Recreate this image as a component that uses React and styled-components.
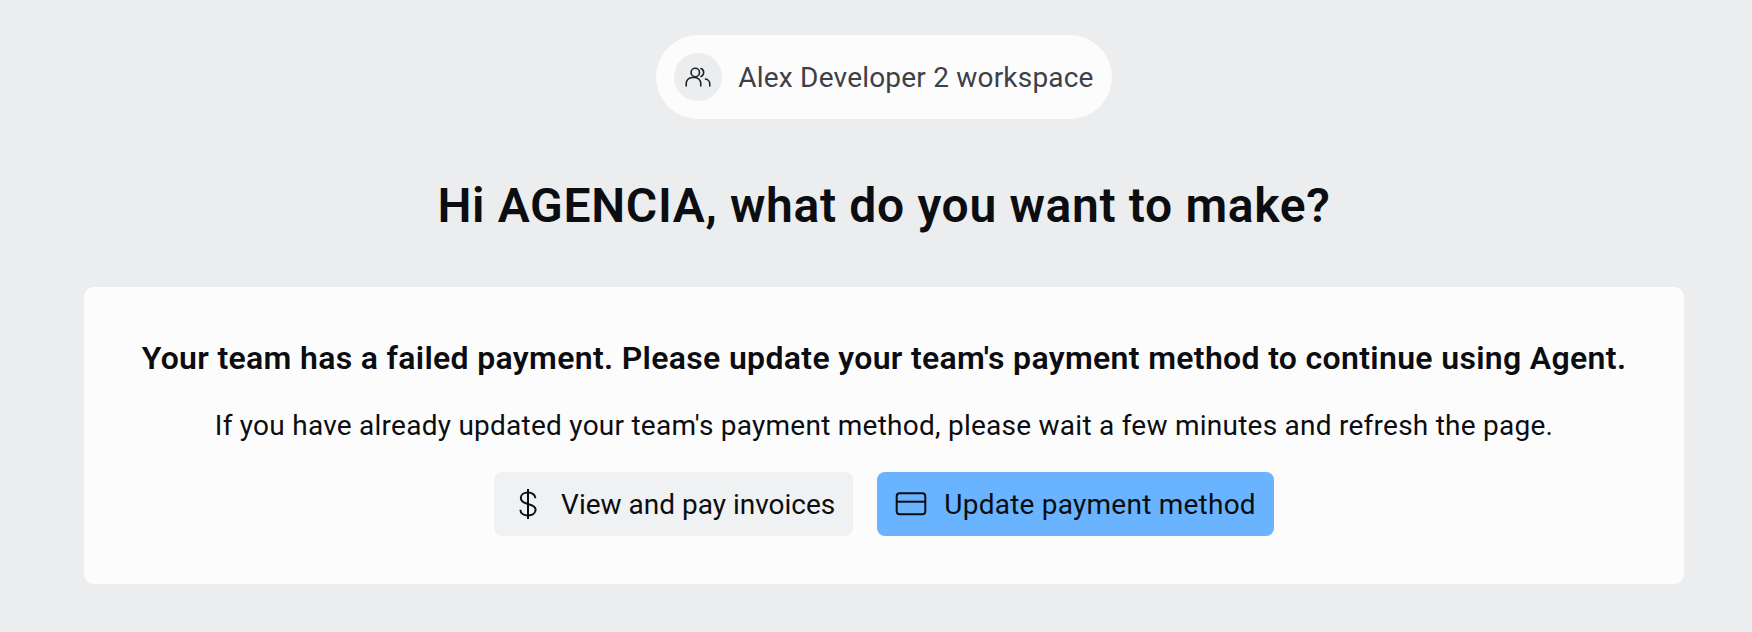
import React from 'react'
import styled, { createGlobalStyle } from 'styled-components'

const GlobalStyle = createGlobalStyle`
  html, body {
    margin: 0;
    padding: 0;
    background: #ecedef;
    font-family: "Roboto", "Liberation Sans", sans-serif;
  }
`

const App = () => {
  return (
    <Page>
      <GlobalStyle />
      <WorkspacePill>
        <Avatar>
          <svg width="26" height="26" viewBox="0 0 26 26" fill="none" stroke="#1f2328" strokeWidth="1.6" strokeLinecap="round">
            <circle cx="10.3" cy="8.5" r="4.2" />
            <path d="M1.2 22v-2.5a6 6 0 0 1 6-6h2.6a6 6 0 0 1 6 6V22" />
            <path d="M16 4.6a4.2 4.2 0 0 1 0 7.8" />
            <path d="M20.4 15a5 5 0 0 1 4.4 5v2" />
          </svg>
        </Avatar>
        <WorkspaceName>Alex Developer 2 workspace</WorkspaceName>
      </WorkspacePill>
      <Heading>Hi AGENCIA, what do you want to make?</Heading>
      <Card>
        <Title>Your team has a failed payment. Please update your team's payment method to continue using Agent.</Title>
        <Note>If you have already updated your team's payment method, please wait a few minutes and refresh the page.</Note>
        <Actions>
          <ActionButton>
            <svg width="32" height="32" viewBox="0 0 32 32" fill="none" stroke="#0b0d10" strokeWidth="2">
              <path d="M16 1v30" />
              <path d="M23.4 10.2c0-3.5-3.3-5.6-7.4-5.6s-7.2 2.2-7.2 5.4c0 3.6 3.2 5 7.2 5.9s7.6 2.2 7.6 5.9c0 3.4-3.4 5.6-7.6 5.6s-7.6-2.2-7.6-5.7" />
            </svg>
            <span>View and pay invoices</span>
          </ActionButton>
          <ActionButton $primary>
            <svg width="32" height="32" viewBox="0 0 32 32" fill="none" stroke="#0b0d10" strokeWidth="2">
              <rect x="1.7" y="5.3" width="28.6" height="21" rx="3" />
              <path d="M1.7 13.7h28.6" />
            </svg>
            <span>Update payment method</span>
          </ActionButton>
        </Actions>
      </Card>
    </Page>
  )
}

export default App

const Page = styled.div`
  min-height: 632px;
  box-sizing: border-box;
  padding: 35px 68px 48px 84px;
  display: flex;
  flex-direction: column;
  align-items: center;
`

const WorkspacePill = styled.div`
  height: 84px;
  box-sizing: border-box;
  padding: 0 18px;
  display: flex;
  align-items: center;
  gap: 16px;
  border-radius: 42px;
  background: #fcfcfd;
`

const Avatar = styled.div`
  width: 48px;
  height: 48px;
  border-radius: 50%;
  background: #ecedef;
  display: flex;
  align-items: center;
  justify-content: center;
`

const WorkspaceName = styled.span`
  font-size: 28px;
  line-height: 38px;
  padding-top: 2px;
  letter-spacing: 0.2px;
  color: #3d4047;
`

const Heading = styled.h1`
  margin: 57px 0 0;
  font-size: 48px;
  line-height: 60px;
  font-weight: 600;
  letter-spacing: 0.66px;
  color: #0b0d10;
`

const Card = styled.section`
  width: 100%;
  box-sizing: border-box;
  margin-top: 51px;
  height: 297px;
  padding-top: 51px;
  border-radius: 10px;
  background: #fcfcfd;
  display: flex;
  flex-direction: column;
  align-items: center;
`

const Title = styled.div`
  font-size: 32px;
  line-height: 40px;
  font-weight: 600;
  letter-spacing: 0.33px;
  color: #0b0d10;
`

const Note = styled.div`
  margin-top: 30px;
  font-size: 28px;
  line-height: 36px;
  letter-spacing: 0.25px;
  color: #0b0d10;
`

const Actions = styled.div`
  margin-top: 28px;
  display: flex;
  gap: 24px;
`

const ActionButton = styled.button`
  height: 64px;
  box-sizing: border-box;
  padding: 0 18px;
  display: flex;
  align-items: center;
  gap: 17px;
  border: none;
  border-radius: 8px;
  font-family: inherit;
  font-size: 28px;
  letter-spacing: ${p => (p.$primary ? '0.24px' : '0')};
  color: #0b0d10;
  background: ${p => (p.$primary ? '#69b3ff' : '#f0f1f3')};
`
